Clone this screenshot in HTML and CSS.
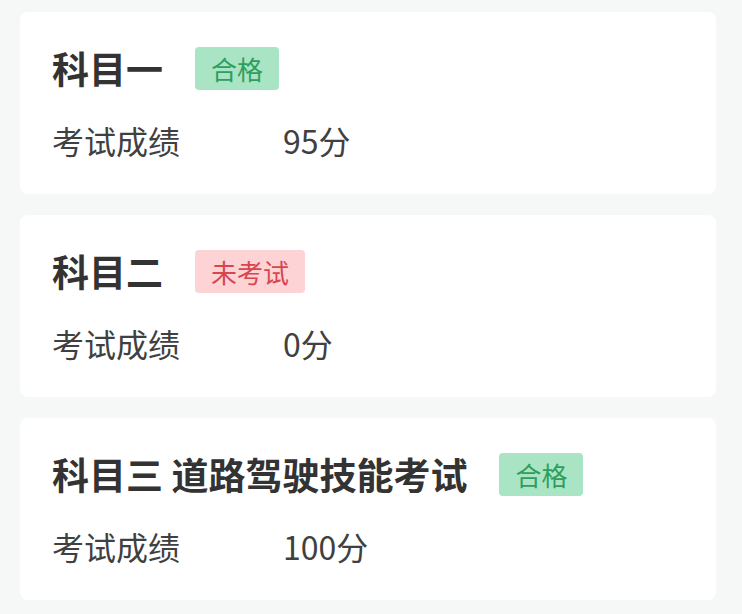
FILE: index.html
```html
<!DOCTYPE html>
<html>
	<head>
		<meta charset="utf-8">
		<meta name="viewport" content="width=device-width, initial-scale=1.0">
		<title>考试成绩</title>
		<link rel="stylesheet" href="styles.css">
	</head>
<body class="body">

<div class="list">

	<div class="card">
		<div class="head">
			<h2 class="title">科目一</h2>
			<span class="tag pass">合格</span>
		</div>
		<div class="row">
			<span class="label">考试成绩</span>
			<span class="value">95分</span>
		</div>
	</div>

	<div class="card">
		<div class="head">
			<h2 class="title">科目二</h2>
			<span class="tag none">未考试</span>
		</div>
		<div class="row">
			<span class="label">考试成绩</span>
			<span class="value">0分</span>
		</div>
	</div>

	<div class="card">
		<div class="head">
			<h2 class="title">科目三 道路驾驶技能考试</h2>
			<span class="tag pass">合格</span>
		</div>
		<div class="row">
			<span class="label">考试成绩</span>
			<span class="value">100分</span>
		</div>
	</div>

</div>

</body>
</html>
```

FILE: styles.css
```css
html,
body {
	margin: 0;
	background-color: #f5f8f7;
	font-family: "Noto Sans CJK SC", "Noto Sans", sans-serif;
}

.list {
	display: flex;
	flex-direction: column;
	gap: 21px;
	padding: 12px 26px 0 20px;
}

.card {
	background-color: #fff;
	border-radius: 8px;
	height: 182px;
	box-sizing: border-box;
	padding: 35px 32px 0 32px;
}

.head {
	display: flex;
	align-items: center;
	height: 43px;
}

.title {
	margin: 0;
	font-size: 37px;
	font-weight: bold;
	color: #333;
	line-height: 43px;
}

.tag {
	margin-left: 32px;
	padding: 0 16px;
	height: 43px;
	line-height: 43px;
	font-size: 26px;
	border-radius: 4px;
}

.pass {
	background-color: #a9e5c4;
	color: #2e9e5e;
}

.none {
	background-color: #fdd3d6;
	color: #d8454f;
}

.row {
	display: flex;
	margin-top: 30px;
	line-height: 40px;
	font-size: 32px;
	color: #404040;
}

.label {
	width: 231px;
}
```
